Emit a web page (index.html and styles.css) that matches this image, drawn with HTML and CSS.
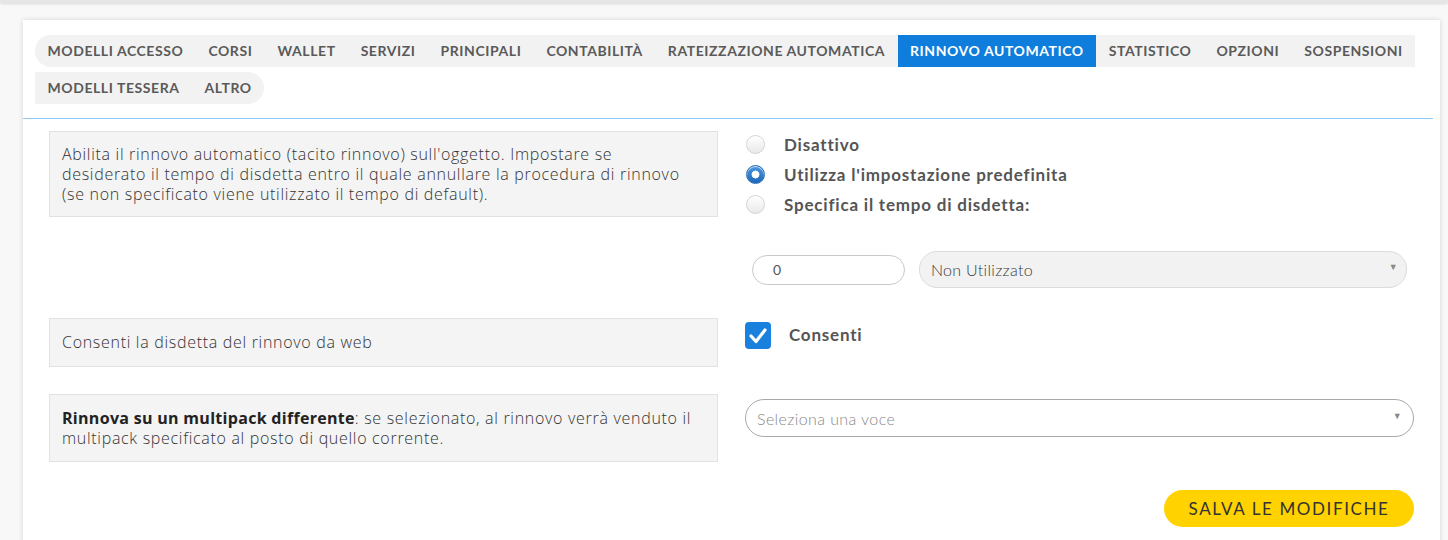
FILE: index.html
```html
<!DOCTYPE html>
<html lang="it">
<head>
<meta charset="utf-8">
<title>Rinnovo automatico</title>
<link rel="stylesheet" href="styles.css">
</head>
<body>
<div class="topbar"></div>
<div class="card">
  <div class="tabs-head">
    <ul class="tabs">
      <li class="tab first">MODELLI ACCESSO</li>
      <li class="tab">CORSI</li>
      <li class="tab">WALLET</li>
      <li class="tab">SERVIZI</li>
      <li class="tab">PRINCIPALI</li>
      <li class="tab">CONTABILITÀ</li>
      <li class="tab">RATEIZZAZIONE AUTOMATICA</li>
      <li class="tab active">RINNOVO AUTOMATICO</li>
      <li class="tab">STATISTICO</li>
      <li class="tab">OPZIONI</li>
      <li class="tab">SOSPENSIONI</li>
      <li class="tab">MODELLI TESSERA</li>
      <li class="tab last">ALTRO</li>
    </ul>
  </div>

  <div class="content">
    <div class="row row-1">
      <div class="desc">Abilita il rinnovo automatico (tacito rinnovo) sull'oggetto. Impostare se desiderato il tempo di disdetta entro il quale annullare la procedura di rinnovo (se non specificato viene utilizzato il tempo di default).</div>
      <div class="ctrl radios">
        <label class="radio"><span class="rb"></span><span class="rlabel">Disattivo</span></label>
        <label class="radio"><span class="rb on"></span><span class="rlabel">Utilizza l'impostazione predefinita</span></label>
        <label class="radio"><span class="rb"></span><span class="rlabel">Specifica il tempo di disdetta:</span></label>
      </div>
    </div>

    <div class="row row-time">
      <div class="spacer"></div>
      <div class="ctrl time">
        <div class="num">0</div>
        <div class="sel grey"><span>Non Utilizzato</span><span class="arr">▼</span></div>
      </div>
    </div>

    <div class="row row-2">
      <div class="desc">Consenti la disdetta del rinnovo da web</div>
      <div class="ctrl check">
        <span class="cb"><svg viewBox="0 0 26 27" width="26" height="27"><path d="M6 14 L11 19.5 L20 8" fill="none" stroke="#fff" stroke-width="3.2" stroke-linecap="round" stroke-linejoin="round"/></svg></span>
        <span class="clabel">Consenti</span>
      </div>
    </div>

    <div class="row row-3">
      <div class="desc"><b>Rinnova su un multipack differente</b>: se selezionato, al rinnovo verrà venduto il multipack specificato al posto di quello corrente.</div>
      <div class="ctrl">
        <div class="sel white"><span class="ph">Seleziona una voce</span><span class="arr">▼</span></div>
      </div>
    </div>

    <div class="actions">
      <button class="save">SALVA LE MODIFICHE</button>
    </div>
  </div>
</div>
</body>
</html>
```
FILE: styles.css
```css
html, body {
  margin: 0;
  padding: 0;
}
body {
  background: #f8f8f8;
  font-family: "Lato", "Open Sans", sans-serif;
  color: #333;
  height: 540px;
  overflow: hidden;
}
.topbar {
  height: 3px;
  background: #e6e6e6;
  box-shadow: 0 1px 3px rgba(0,0,0,0.12);
}
.card {
  margin: 17px 0 0 23px;
  width: 1417px;
  background: #fff;
  box-shadow: 0 0 5px rgba(0,0,0,0.15);
  height: 540px;
}
.tabs-head {
  padding: 15px 5px 14px 12px;
  border-bottom: 1px solid #90c9f4;
  margin-right: 7px;
}
.tabs {
  list-style: none;
  margin: 0;
  padding: 0;
  display: flex;
  flex-wrap: wrap;
  row-gap: 5px;
}
.tab {
  background: #f2f2f2;
  height: 32px;
  line-height: 32px;
  padding: 0 12.5px;
  font-size: 14px;
  font-weight: 700;
  color: #5a5a5a;
  letter-spacing: 0.57px;
  white-space: nowrap;
}
.tab.first { border-radius: 16px 0 0 16px; }
.tab.last { border-radius: 0 16px 16px 0; }
.tab.active {
  background: #0e7ddb;
  color: #fff;
}
.content {
  padding: 12px 26px 0 26px;
}
.row {
  display: flex;
  gap: 27px;
  align-items: flex-start;
}
.desc, .spacer {
  width: 669px;
  flex: none;
}
.desc {
  box-sizing: border-box;
  background: #f4f4f4;
  border: 1px solid #e2e2e2;
  padding: 12px 18px 12px 12px;
  font-family: "Open Sans", "Lato", sans-serif;
  font-size: 16px;
  font-weight: 300;
  line-height: 20px;
  letter-spacing: 0.7px;
  color: #333;
}
.desc b { font-weight: 700; color: #222; letter-spacing: 0.3px; }
.ctrl {
  width: 669px;
  flex: none;
}
.radios {
  display: flex;
  flex-direction: column;
  margin-top: -2px;
}
.radio {
  display: flex;
  align-items: center;
  height: 30px;
}
.rb {
  width: 19px;
  height: 19px;
  border-radius: 50%;
  margin-left: 1px;
  border: 1px solid #d4d4d4;
  background: linear-gradient(#ffffff, #e9e9e9);
  box-shadow: inset 0 1px 1px rgba(255,255,255,0.8);
  flex: none;
  box-sizing: border-box;
}
.rb.on {
  border-color: #2a6fba;
  background: radial-gradient(circle at 50% 50%, #fff 0, #fff 3px, #dfe9f5 3.8px, transparent 4.2px), linear-gradient(#4c95e0, #1e67b8);
}
.rlabel {
  margin-left: 19px;
  font-size: 17px;
  font-weight: 700;
  color: #555;
  letter-spacing: 0.8px;
}
.row-time {
  margin-top: 32px;
}
.time {
  display: flex;
  align-items: center;
  gap: 14px;
  padding-left: 7px;
  box-sizing: border-box;
}
.num {
  width: 153px;
  height: 30px;
  box-sizing: border-box;
  border: 1px solid #c9c9c9;
  border-radius: 15px;
  padding-left: 20px;
  line-height: 28px;
  font-size: 14px;
  color: #555;
  flex: none;
}
.sel {
  box-sizing: border-box;
  display: flex;
  align-items: center;
  justify-content: space-between;
  font-size: 16px;
  font-weight: 300;
}
.sel.grey {
  width: 488px;
  height: 37px;
  background: #f2f2f2;
  border: 1px solid #dcdcdc;
  border-radius: 18px;
  padding: 0 8px 0 11px;
  color: #3a3a3a;
  letter-spacing: 0.3px;
}
.sel.white {
  width: 669px;
  height: 38px;
  background: #fff;
  border: 1px solid #a9a9a9;
  border-radius: 19px;
  padding: 0 11px 0 11px;
  letter-spacing: 0.4px;
}
.ph { color: #888; }
.arr {
  font-size: 9px;
  color: #8a8a8a;
  margin-top: -6px;
}
.row-2 {
  margin-top: 30px;
}
.row-2 .desc {
  padding-top: 13px;
  padding-bottom: 14px;
}
.check {
  display: flex;
  align-items: center;
  padding-top: 4px;
}
.cb {
  width: 26px;
  height: 27px;
  background: #1a80de;
  border-radius: 4px;
  display: block;
  flex: none;
}
.cb svg { display: block; }
.clabel {
  margin-left: 18px;
  margin-top: -2px;
  font-size: 17px;
  font-weight: 700;
  color: #555;
  letter-spacing: 0.8px;
}
.row-3 {
  margin-top: 27px;
}
.row-3 .ctrl {
  padding-top: 5px;
}
.row-3 .desc {
  padding-top: 13px;
  padding-bottom: 13px;
}
.actions {
  display: flex;
  justify-content: flex-end;
  margin-top: 28px;
}
.save {
  width: 250px;
  height: 37px;
  border: none;
  border-radius: 19px;
  background: #ffd200;
  color: #333;
  font-family: "Lato", "Open Sans", sans-serif;
  font-size: 17px;
  font-weight: 400;
  letter-spacing: 1.6px;
  padding: 0;
}
```
